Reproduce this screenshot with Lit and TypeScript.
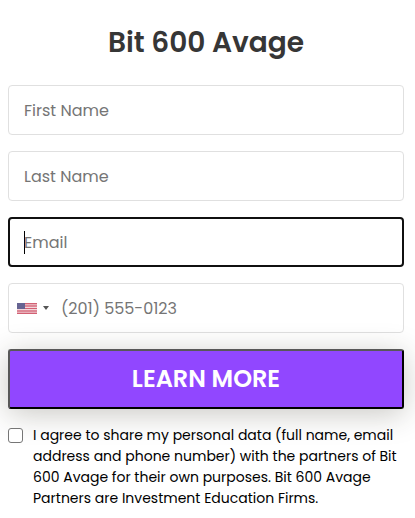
import { LitElement, html, css } from "lit";
import { customElement } from "lit/decorators.js";

@customElement("app-root")
export class AppRoot extends LitElement {
  static styles = css`
    :host {
      display: block;
      box-sizing: border-box;
      height: 518px;
      padding: 22px 11px 0 8px;
      overflow: hidden;
      background: #fff;
      color: #000;
      font-family: Poppins, Inter, "Open Sans", sans-serif;
    }
    * { box-sizing: border-box; }
    h1 {
      margin: 0 0 21px;
      font-size: 28px;
      line-height: 42px;
      font-weight: 600;
      text-align: center;
      color: #363636;
      white-space: nowrap;
    }
    form { display: flex; flex-direction: column; gap: 16px; }
    .field {
      display: flex;
      align-items: center;
      height: 50px;
      padding: 0 15px;
      border: 1px solid #e0e0e0;
      border-radius: 4px;
      background: #fff;
      color: #757575;
      font-size: 16px;
      line-height: 24px;
      white-space: nowrap;
    }
    .field span { padding-top: 2px; }
    .focused { border: 2px solid #101010; padding: 0 14px; }
    .caret { width: 1px; height: 23px; margin-right: -1px; background: #000; }
    .phone { padding-left: 8px; }
    .flag { width: 20px; height: 11px; opacity: 0.7; }
    .arrow {
      margin: 0 12px 0 6px;
      border: 3px solid transparent;
      border-top: 4px solid #555;
      border-bottom: 0;
    }
    button {
      height: 60px;
      padding: 0;
      border: 2px solid #000;
      border-top-color: #585858;
      border-left-color: #585858;
      border-radius: 3px;
      background: #9147ff;
      color: #fff;
      font: inherit;
      font-size: 24px;
      line-height: 36px;
      font-weight: 600;
      box-shadow: 0 5px 30px rgba(46, 42, 28, 0.26);
      position: relative;
    }
    .consent { display: flex; position: relative; font-size: 14px; line-height: 21px; }
    .box {
      flex: none;
      width: 15px;
      height: 15px;
      margin: 3px 10px 0 0;
      border: 1px solid #767676;
      border-radius: 3px;
      background: #fff;
    }
    .line { display: block; white-space: nowrap; }
  `;

  render() {
    return html`
      <h1>Bit 600 Avage</h1>
      <form>
        <div class="field"><span>First Name</span></div>
        <div class="field"><span>Last Name</span></div>
        <div class="field focused"><i class="caret"></i><span>Email</span></div>
        <div class="field phone">
          <svg class="flag" viewBox="0 0 20 11" preserveAspectRatio="none">
            <path fill="#fff" d="M0 0h20v11H0z" />
            <path stroke="#c01f3a" stroke-width="1.05" d="M0 .42h20M0 2.12h20M0 3.81h20M0 5.5h20M0 7.19h20M0 8.88h20M0 10.58h20" />
            <path fill="#262364" d="M0 0h8v6H0z" />
          </svg>
          <i class="arrow"></i><span>(201) 555-0123</span>
        </div>
        <button type="button">LEARN MORE</button>
        <div class="consent">
          <i class="box"></i>
          <div>
            <span class="line">I agree to share my personal data (full name, email</span>
            <span class="line">address and phone number) with the partners of Bit</span>
            <span class="line">600 Avage for their own purposes. Bit 600 Avage</span>
            <span class="line">Partners are Investment Education Firms.</span>
          </div>
        </div>
      </form>
    `;
  }
}
